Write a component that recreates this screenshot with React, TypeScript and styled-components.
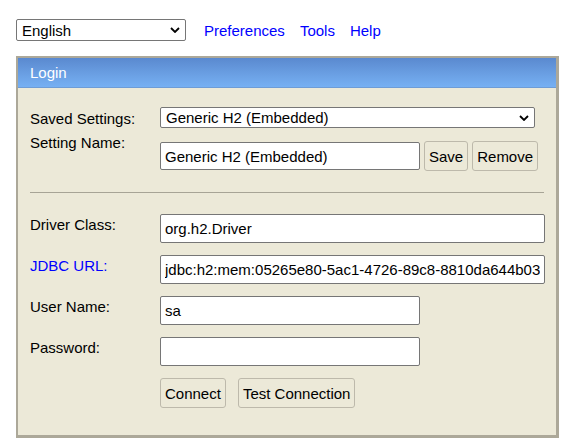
import React from "react";
import styled, { createGlobalStyle } from "styled-components";

const GlobalStyle = createGlobalStyle`
  html, body {
    margin: 0;
    padding: 0;
    background: #ffffff;
  }
  body {
    font-family: "Liberation Sans", Arial, sans-serif;
    font-size: 15px;
    color: #000000;
  }
  * { box-sizing: border-box; }
`;

const Page = styled.div`
  padding: 19px 0 0 16px;
`;

const Toolbar = styled.div`
  display: flex;
  align-items: center;
  height: 22px;
`;

const Links = styled.nav`
  display: flex;
  align-items: center;
  gap: 15px;
  margin-left: 18px;
`;

const ToolLink = styled.a`
  color: #0000ff;
  text-decoration: none;
  font-size: 15px;
  line-height: 17px;
  cursor: pointer;
`;

const SelectWrap = styled.div<{ $width: number; $height: number }>`
  position: relative;
  width: ${(p) => p.$width}px;
  height: ${(p) => p.$height}px;
`;

const NativeSelect = styled.select`
  appearance: none;
  -webkit-appearance: none;
  width: 100%;
  height: 100%;
  margin: 0;
  padding: 0 20px 0 5px;
  border: 1px solid #767676;
  border-radius: 2px;
  background: #ffffff;
  font-family: "Liberation Sans", Arial, sans-serif;
  font-size: 15px;
  color: #000000;
  outline: none;
`;

const Chevron = styled.svg`
  position: absolute;
  right: 6px;
  top: 50%;
  transform: translateY(-50%);
  pointer-events: none;
`;

const Panel = styled.section`
  width: 543px;
  margin-top: 15px;
  border-style: solid;
  border-color: #aca899;
  border-width: 2px 3px 3px 2px;
  background: #ece9d8;
`;

const PanelHeader = styled.div`
  height: 30px;
  padding: 6px 0 0 12px;
  background: linear-gradient(to bottom, #5a89cf 0%, #6a9fe3 55%, #76b0f3 100%);
  border-bottom: 1px solid #6d9cd6;
  color: #ffffff;
  font-size: 15px;
  line-height: 17px;
`;

const PanelBody = styled.div`
  padding: 19px 11px 27px 12px;
`;

const FormRow = styled.div<{ $gap: number }>`
  display: grid;
  grid-template-columns: 130px 1fr;
  align-items: start;
  margin-top: ${(p) => p.$gap}px;
`;

const Label = styled.label<{ $offset: number; $link?: boolean }>`
  padding-top: ${(p) => p.$offset}px;
  line-height: 17px;
  font-size: 15px;
  color: ${(p) => (p.$link ? "#0000ff" : "#000000")};
`;

const Controls = styled.div<{ $pad?: number }>`
  display: flex;
  align-items: center;
  padding-top: ${(p) => p.$pad ?? 0}px;
`;

const TextInput = styled.input<{ $width: number; $height: number }>`
  width: ${(p) => p.$width}px;
  height: ${(p) => p.$height}px;
  margin: 0;
  padding: 0 4px;
  border: 1px solid #767676;
  border-radius: 2px;
  background: #ffffff;
  font-family: "Liberation Sans", Arial, sans-serif;
  font-size: 15px;
  color: #000000;
  outline: none;
`;

const Button = styled.button<{ $left?: number }>`
  height: 30px;
  margin: 0 0 0 ${(p) => p.$left ?? 0}px;
  padding: 0 4px;
  border: 1px solid #bdb9ab;
  border-radius: 3px;
  background: #ece9d8;
  font-family: "Liberation Sans", Arial, sans-serif;
  font-size: 15px;
  color: #000000;
  cursor: pointer;
`;

const Divider = styled.hr`
  height: 1px;
  margin: 21px 1px 0 0;
  border: none;
  background: #a7a496;
`;

const ChevronIcon = () => (
  <Chevron width="10" height="6" viewBox="0 0 10 6">
    <path d="M1 1 L5 5 L9 1" fill="none" stroke="#000" strokeWidth="1.8" />
  </Chevron>
);

export default function App() {
  return (
    <>
      <GlobalStyle />
      <Page>
        <Toolbar>
          <SelectWrap $width={170} $height={22}>
            <NativeSelect defaultValue="en">
              <option value="en">English</option>
              <option value="de">Deutsch</option>
            </NativeSelect>
            <ChevronIcon />
          </SelectWrap>
          <Links>
            <ToolLink>Preferences</ToolLink>
            <ToolLink>Tools</ToolLink>
            <ToolLink>Help</ToolLink>
          </Links>
        </Toolbar>

        <Panel>
          <PanelHeader>Login</PanelHeader>
          <PanelBody>
            <FormRow $gap={0}>
              <Label $offset={3}>Saved Settings:</Label>
              <SelectWrap $width={375} $height={21}>
                <NativeSelect defaultValue="h2e">
                  <option value="h2e">Generic H2 (Embedded)</option>
                  <option value="h2s">Generic H2 (Server)</option>
                </NativeSelect>
                <ChevronIcon />
              </SelectWrap>
            </FormRow>

            <FormRow $gap={6}>
              <Label $offset={0}>Setting Name:</Label>
              <Controls $pad={7}>
                <TextInput $width={260} $height={28} defaultValue="Generic H2 (Embedded)" />
                <Button $left={4}>Save</Button>
                <Button $left={4}>Remove</Button>
              </Controls>
            </FormRow>

            <Divider />

            <FormRow $gap={21}>
              <Label $offset={2}>Driver Class:</Label>
              <Controls>
                <TextInput $width={385} $height={29} defaultValue="org.h2.Driver" />
              </Controls>
            </FormRow>

            <FormRow $gap={12}>
              <Label $offset={2} $link>JDBC URL:</Label>
              <Controls>
                <TextInput
                  $width={385}
                  $height={29}
                  defaultValue="jdbc:h2:mem:05265e80-5ac1-4726-89c8-8810da644b03"
                />
              </Controls>
            </FormRow>

            <FormRow $gap={12}>
              <Label $offset={2}>User Name:</Label>
              <Controls>
                <TextInput $width={260} $height={29} defaultValue="sa" />
              </Controls>
            </FormRow>

            <FormRow $gap={12}>
              <Label $offset={2}>Password:</Label>
              <Controls>
                <TextInput $width={260} $height={29} type="password" defaultValue="" />
              </Controls>
            </FormRow>

            <FormRow $gap={12}>
              <span />
              <Controls>
                <Button>Connect</Button>
                <Button $left={12}>Test Connection</Button>
              </Controls>
            </FormRow>
          </PanelBody>
        </Panel>
      </Page>
    </>
  );
}
